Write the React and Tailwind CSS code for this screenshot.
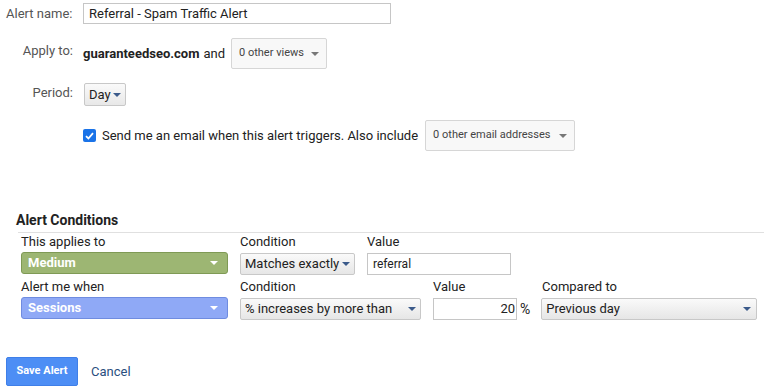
import React from 'react';

const Caret = ({ color = '#555' }) => (
  <svg width="8" height="4" viewBox="0 0 8 4" className="shrink-0">
    <path d="M0 0h8L4 4z" fill={color} />
  </svg>
);

const App = () => {
  return (
    <div className="w-[764px] h-[389px] bg-white text-[13px] text-[#222] overflow-hidden relative" style={{ fontFamily: 'Roboto, "Liberation Sans", sans-serif' }}>
      {/* Top form */}
      <div className="flex items-center pt-[3px]">
        <div className="w-[83px] pl-[6px] text-[#555]">Alert name:</div>
        <div className="w-[308px] h-[21px] border border-[#c6c6c6] pl-[5px] flex items-center">Referral - Spam Traffic Alert</div>
      </div>

      <div className="flex items-center mt-[14px]">
        <div className="w-[77px] text-right pr-[4px] text-[#555] -mt-[6px]">Apply to:</div>
        <div className="flex items-center pl-[6px]">
          <span className="font-bold">guaranteedseo.com</span>
          <span className="ml-[4px]">and</span>
          <div className="ml-[6px] w-[96px] h-[31px] border border-[#d6d6d6] rounded-[2px] bg-[#f8f8f8] flex items-center justify-between px-[7px] text-[11px] text-[#444]">
            <span>0 other views</span>
            <Caret color="#777" />
          </div>
        </div>
      </div>

      <div className="flex items-center mt-[14px]">
        <div className="w-[77px] text-right pr-[4px] text-[#555] -mt-[3px]">Period:</div>
        <div className="ml-[7px] h-[23px] w-[42px] border border-[#c8c8c8] rounded-[2px] bg-gradient-to-b from-[#fafafa] to-[#e8e8e8] flex items-center justify-between px-[4px]">
          <span>Day</span>
          <Caret color="#3b5a8a" />
        </div>
      </div>

      <div className="flex items-center mt-[14px] pl-[83px]">
        <div className="w-[13px] h-[13px] rounded-[2px] bg-[#1a73e8] flex items-center justify-center">
          <svg width="9" height="8" viewBox="0 0 9 8"><path d="M1 4.2L3.4 6.5L8 1.2" stroke="#fff" strokeWidth="1.8" fill="none" /></svg>
        </div>
        <span className="ml-[6px]">Send me an email when this alert triggers. Also include</span>
        <div className="ml-[7px] w-[150px] h-[31px] border border-[#d6d6d6] rounded-[2px] bg-[#f8f8f8] flex items-center justify-between px-[7px] text-[11px] text-[#444]">
          <span>0 other email addresses</span>
          <Caret color="#777" />
        </div>
      </div>

      {/* Alert Conditions */}
      <div className="mt-[60px] pl-[16px] text-[14px] font-bold leading-[18px]">Alert Conditions</div>
      <div className="ml-[18px] mt-[3px] border-t border-[#e0e0e0]"></div>

      <div className="pl-[21px] pt-[1px]">
        <div className="flex leading-[16px]">
          <div className="w-[219px]">This applies to</div>
          <div className="w-[127px]">Condition</div>
          <div>Value</div>
        </div>
        <div className="flex items-center mt-[1px]">
          <div className="w-[207px] h-[22px] rounded-[3px] bg-[#9db673] border border-[#7f9a55] flex items-center justify-between pl-[6px] pr-[9px] text-white font-bold">
            <span>Medium</span>
            <Caret color="#fff" />
          </div>
          <div className="ml-[12px] w-[115px] h-[22px] mt-[2px] border border-[#c8c8c8] rounded-[2px] bg-gradient-to-b from-[#fafafa] to-[#e6e6e6] flex items-center justify-between px-[4px]">
            <span>Matches exactly</span>
            <Caret color="#3b5a8a" />
          </div>
          <div className="ml-[12px] w-[144px] h-[22px] mt-[2px] border border-[#c6c6c6] flex items-center pl-[5px] text-[12px]">referral</div>
        </div>

        <div className="flex leading-[16px] mt-[4px]">
          <div className="w-[219px]">Alert me when</div>
          <div className="w-[193px]">Condition</div>
          <div className="w-[109px]">Value</div>
          <div>Compared to</div>
        </div>
        <div className="flex items-center mt-[1px]">
          <div className="w-[207px] h-[22px] rounded-[3px] bg-[#8fa9f6] border border-[#6f8ce0] flex items-center justify-between pl-[6px] pr-[9px] text-white font-bold">
            <span>Sessions</span>
            <Caret color="#fff" />
          </div>
          <div className="ml-[12px] w-[181px] h-[22px] mt-[2px] border border-[#c8c8c8] rounded-[2px] bg-gradient-to-b from-[#fafafa] to-[#e6e6e6] flex items-center justify-between px-[4px]">
            <span>% increases by more than</span>
            <Caret color="#3b5a8a" />
          </div>
          <div className="ml-[12px] w-[84px] h-[22px] mt-[2px] border border-[#c6c6c6] flex items-center justify-end pr-[1px]">20</div>
          <span className="ml-[3px] mt-[2px] text-[14px]">%</span>
          <div className="ml-[11px] w-[216px] h-[22px] mt-[2px] border border-[#c8c8c8] rounded-[2px] bg-gradient-to-b from-[#fafafa] to-[#e6e6e6] flex items-center justify-between pl-[4px] pr-[5px]">
            <span>Previous day</span>
            <Caret color="#3b5a8a" />
          </div>
        </div>
      </div>

      <div className="flex items-center mt-[37px] pl-[6px]">
        <div className="w-[72px] h-[29px] rounded-[2px] bg-[#4d8ef5] border border-[#3f7fe8] text-white font-bold text-[11px] flex items-center justify-center">Save Alert</div>
        <span className="ml-[13px] text-[#2a4f7f]">Cancel</span>
      </div>
    </div>
  );
};

export default App;
